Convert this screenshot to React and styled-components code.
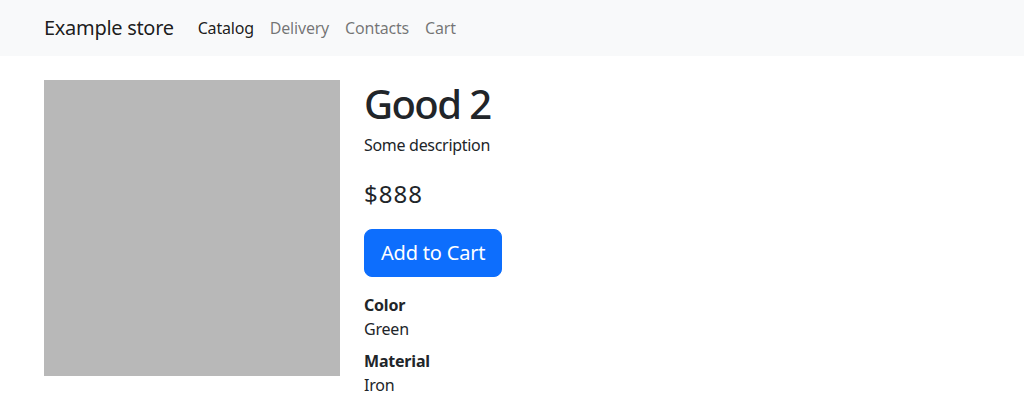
import React from "react";
import styled, { createGlobalStyle } from "styled-components";

const GlobalStyle = createGlobalStyle`
  * {
    box-sizing: border-box;
  }

  body {
    margin: 0;
    font-family: "Noto Sans", "Open Sans", sans-serif;
    font-size: 16px;
    line-height: 1.5;
    letter-spacing: -0.2px;
    color: #212529;
    background: #fff;
  }
`;

const Navbar = styled.nav`
  background: #f8f9fa;
  padding: 8px 0;
`;

const Container = styled.div`
  width: 100%;
  max-width: 960px;
  margin: 0 auto;
  padding: 0 12px;
`;

const NavInner = styled(Container)`
  display: flex;
  align-items: center;
`;

const Brand = styled.a`
  font-size: 20px;
  line-height: 30px;
  padding: 5px 0;
  margin-right: 16px;
  letter-spacing: -0.3px;
  color: rgba(0, 0, 0, 0.9);
  text-decoration: none;
`;

const NavList = styled.div`
  display: flex;
`;

const NavLink = styled.a`
  padding: 8px;
  color: ${(p) => (p.$active ? "rgba(0, 0, 0, 0.9)" : "rgba(0, 0, 0, 0.55)")};
  text-decoration: none;
`;

const Main = styled(Container)`
  display: flex;
  gap: 24px;
  margin-top: 24px;
`;

const Picture = styled.div`
  width: 296px;
  height: 296px;
  flex: none;
  background: #b8b8b8;
`;

const Info = styled.div`
  display: flex;
  flex-direction: column;
  align-items: flex-start;
`;

const Title = styled.h1`
  margin: 0 0 5px;
  font-size: 40px;
  font-weight: 500;
  line-height: 48px;
  letter-spacing: -1.6px;
`;

const Description = styled.p`
  margin: 0 0 22px;
  letter-spacing: -0.3px;
`;

const Price = styled.h4`
  margin: 0 0 21px;
  font-size: 24px;
  font-weight: 400;
  line-height: 29px;
  letter-spacing: 1px;
`;

const CartButton = styled.button`
  font-family: inherit;
  font-size: 20px;
  line-height: 30px;
  letter-spacing: -0.2px;
  padding: 8px 16px;
  border: 1px solid #0d6efd;
  border-radius: 8px;
  background: #0d6efd;
  color: #fff;
  cursor: pointer;
`;

const Props = styled.dl`
  margin: 16px 0 0;
`;

const PropName = styled.dt`
  font-weight: 700;
`;

const PropValue = styled.dd`
  margin: 0 0 8px;
`;

const links = ["Catalog", "Delivery", "Contacts", "Cart"];

const props = [
  { name: "Color", value: "Green" },
  { name: "Material", value: "Iron" },
];

export default function App() {
  return (
    <>
      <GlobalStyle />
      <Navbar>
        <NavInner>
          <Brand href="#">Example store</Brand>
          <NavList>
            {links.map((l, i) => (
              <NavLink key={l} href="#" $active={i === 0}>
                {l}
              </NavLink>
            ))}
          </NavList>
        </NavInner>
      </Navbar>
      <Main>
        <Picture />
        <Info>
          <Title>Good 2</Title>
          <Description>Some description</Description>
          <Price>$888</Price>
          <CartButton>Add to Cart</CartButton>
          <Props>
            {props.map((p) => (
              <React.Fragment key={p.name}>
                <PropName>{p.name}</PropName>
                <PropValue>{p.value}</PropValue>
              </React.Fragment>
            ))}
          </Props>
        </Info>
      </Main>
    </>
  );
}
